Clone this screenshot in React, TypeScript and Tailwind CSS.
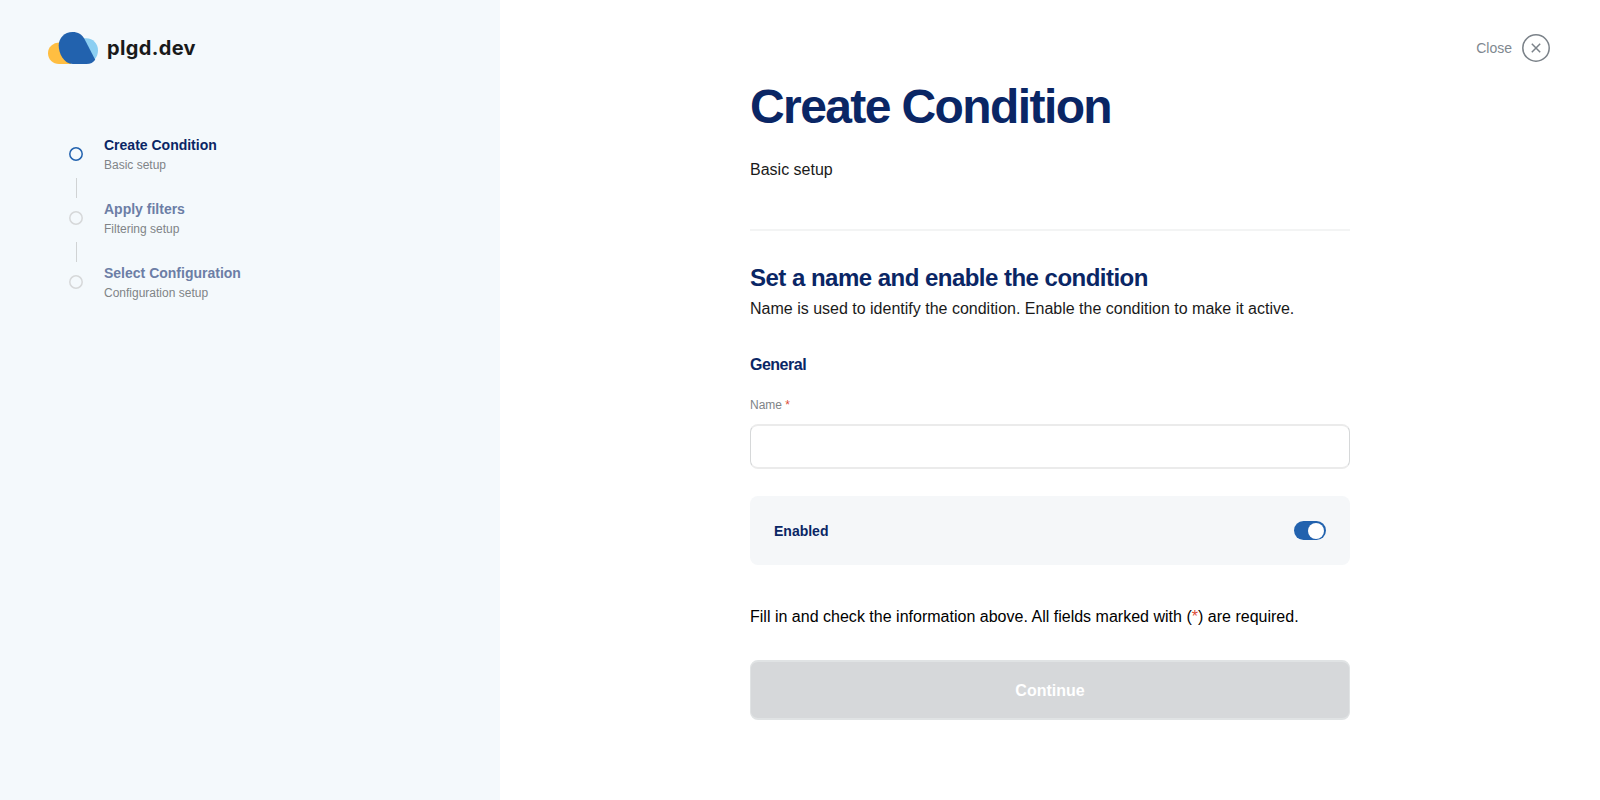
const steps = [
  { title: 'Create Condition', text: 'Basic setup', active: true },
  { title: 'Apply filters', text: 'Filtering setup', active: false },
  { title: 'Select Configuration', text: 'Configuration setup', active: false },
]

function Logo() {
  return (
    <div className="flex items-center gap-[9px]">
      <svg width="50" height="32" viewBox="0 0 50 32">
        <path d="M35 6.600C44 4.800 50 11 50 18.500c0 3.600-1.200 6.500-3.400 9L32 12Z" fill="#8ccff2" />
        <path d="M12 10.500C4.500 10.500 0 15.500 0 21.200 0 27.500 5 32 11 32h12V12Z" fill="#ffbe41" />
        <path d="M24.500 0C16.500 0 10.700 6 10.700 13.500 10.700 21 15.500 32 25 32h13.500c4 0 6.800-1.600 8.700-4.300L36.500 7C34 2.500 30 0 24.500 0Z" fill="#2262ae" />
      </svg>
      <span className="h-8 font-['Inter',sans-serif] text-[20px] leading-8 font-bold tracking-[0.35px] text-[#191a1a]">plgd.dev</span>
    </div>
  )
}

function StepDot({ active }: { active: boolean }) {
  return (
    <svg width="14" height="14" viewBox="0 0 14 14" fill="none" stroke={active ? '#2262ae' : '#d6d8d9'} strokeWidth="1.5">
      <circle cx="7" cy="7" r="6.2" />
    </svg>
  )
}

export default function App() {
  return (
    <div className="flex h-[800px] w-full overflow-hidden bg-white font-['Liberation_Sans',Arial,sans-serif] text-[#1a1a1a]">
      <aside className="w-[500px] shrink-0 bg-[#f4f9fc] pt-8 pl-12">
        <Logo />
        <ol className="mt-[71px] ml-[21px]">
          {steps.map((step, i) => (
            <li key={step.title} className="flex h-16 gap-[21px]">
              <div className="flex w-3.5 flex-col items-center pt-3">
                <StepDot active={step.active} />
                {i < steps.length - 1 && <span className="mt-[17px] ml-px h-5 w-px bg-[#d0d3d4]" />}
              </div>
              <div>
                <div className={step.active ? 'text-sm leading-5 font-bold text-[#0a2665]' : 'text-sm leading-5 font-bold text-[#6c7ea6]'}>{step.title}</div>
                <div className="mt-0.5 text-xs leading-4 text-[#808487]">{step.text}</div>
              </div>
            </li>
          ))}
        </ol>
      </aside>

      <main className="flex grow justify-end">
        <div className="w-[600px] shrink-0 pt-[79px]">
          <h1 className="text-5xl leading-[56px] font-bold tracking-[-1.6px] text-[#0a2665]">Create Condition</h1>
          <p className="mt-[23px] text-base leading-6">Basic setup</p>
          <hr className="mt-[47px] border-t-2 border-[#f3f4f4]" />
          <h2 className="mt-[31px] text-2xl leading-8 font-bold tracking-[-0.52px] text-[#0a2665]">Set a name and enable the condition</h2>
          <p className="mt-[3px] text-base leading-6">Name is used to identify the condition. Enable the condition to make it active.</p>
          <h3 className="mt-8 text-base leading-6 font-bold tracking-[-0.5px] text-[#0a2665]">General</h3>
          <label htmlFor="name" className="mt-5 block text-xs leading-4 text-[#808487]">
            Name <span className="text-[#dc4d38]">*</span>
          </label>
          <input id="name" className="mt-[11px] block h-[45px] w-full rounded-lg border-x border-y-2 border-x-[#d6d8d9] border-y-[#ebebeb] px-4 outline-none" />
          <div className="mt-[27px] flex h-[69px] items-center justify-between rounded-lg bg-[#f5f7f9] px-6">
            <span className="pt-px text-sm leading-5 font-bold text-[#0a2665]">Enabled</span>
            <span role="switch" aria-checked="true" className="flex h-[19px] w-8 items-center justify-end rounded-full bg-[#2262ae] pr-0.5">
              <span className="size-4 rounded-full bg-white" />
            </span>
          </div>
          <p className="mt-10 text-base leading-6 tracking-[0.01px] text-black">
            Fill in and check the information above. All fields marked with (<span className="text-[#dc4d38]">*</span>) are required.
          </p>
          <button className="mt-[31px] block h-[60px] w-full rounded-lg border-x border-y-2 border-[#e0e3e4] bg-[#d6d8da] pt-px text-base font-bold text-white">Continue</button>
        </div>
        <div className="flex w-[250px] shrink-0 justify-end pt-[34px] pr-[50px]">
          <button className="flex h-7 items-center gap-2.5 text-sm leading-7 text-[#808890]">
            Close
            <svg width="28" height="28" viewBox="0 0 28 28" fill="none" stroke="#7b8289" strokeWidth="1.5">
              <circle cx="14" cy="14" r="13.2" />
              <path d="m9.800 9.800 8.400 8.400m0-8.400-8.400 8.400" />
            </svg>
          </button>
        </div>
      </main>
    </div>
  )
}
